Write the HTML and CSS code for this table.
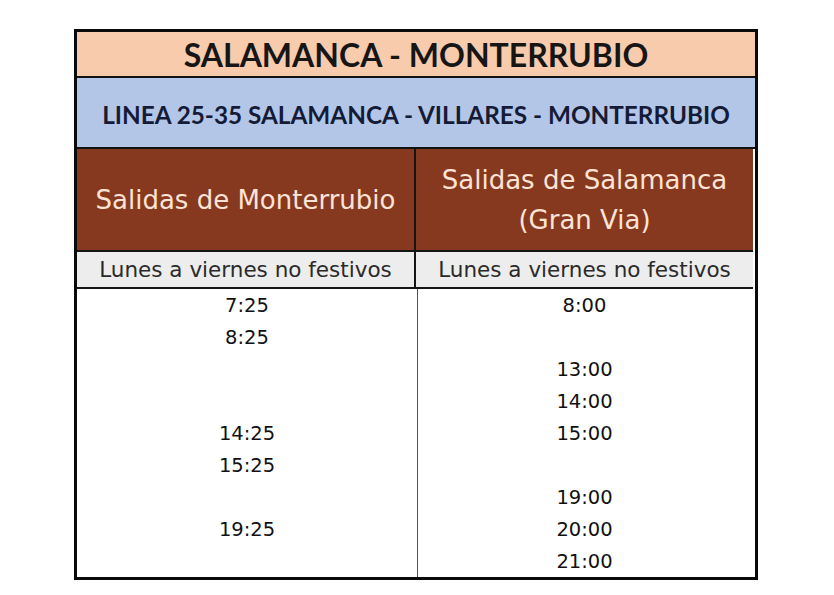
FILE: index.html
```html
<!DOCTYPE html>
<html lang="es">
<head>
<meta charset="utf-8">
<title>Salamanca - Monterrubio</title>
<link rel="stylesheet" href="styles.css">
</head>
<body>
<div class="sheet">
  <div class="title">SALAMANCA - MONTERRUBIO</div>
  <div class="line">LINEA 25-35 SALAMANCA - VILLARES - MONTERRUBIO</div>
  <div class="grid">
    <div class="head left">Salidas de Monterrubio</div>
    <div class="head">Salidas de Salamanca<br>(Gran Via)</div>
    <div class="days left">Lunes a viernes no festivos</div>
    <div class="days">Lunes a viernes no festivos</div>
    <div class="times left">
      <div class="t">7:25</div>
      <div class="t">8:25</div>
      <div class="t"></div>
      <div class="t"></div>
      <div class="t">14:25</div>
      <div class="t">15:25</div>
      <div class="t"></div>
      <div class="t">19:25</div>
      <div class="t"></div>
    </div>
    <div class="times">
      <div class="t">8:00</div>
      <div class="t"></div>
      <div class="t">13:00</div>
      <div class="t">14:00</div>
      <div class="t">15:00</div>
      <div class="t"></div>
      <div class="t">19:00</div>
      <div class="t">20:00</div>
      <div class="t">21:00</div>
    </div>
  </div>
</div>
</body>
</html>
```

FILE: styles.css
```css
html, body {
  margin: 0;
  background: #ffffff;
}
body {
  padding: 29px 0 0 74px;
}
.sheet {
  width: 678px;
  border: 3px solid #0a0a0a;
  background: #ffffff;
}
.title {
  height: 44px;
  border-bottom: 2px solid #111;
  background: #f8cbad;
  display: flex;
  align-items: center;
  justify-content: center;
  font-family: "Lato", "Liberation Sans", sans-serif;
  font-weight: 700;
  font-size: 32px;
  color: #161616;
}
.line {
  height: 69px;
  border-bottom: 2px solid #111;
  background: #b4c6e7;
  display: flex;
  align-items: center;
  justify-content: center;
  padding-top: 3px;
  box-sizing: content-box;
  height: 66px;
  font-family: "Lato", "Liberation Sans", sans-serif;
  font-weight: 700;
  font-size: 24.3px;
  color: #141b36;
}
.grid {
  display: grid;
  grid-template-columns: 339px 337px;
  grid-template-rows: 103px 37px 288px;
}
.left {
  border-right: 2px solid #151515;
}
.head {
  border-bottom: 2px solid #151515;
  background: #86391f;
  display: flex;
  align-items: center;
  justify-content: center;
  text-align: center;
  font-family: "DejaVu Sans", "Liberation Sans", sans-serif;
  font-size: 26px;
  line-height: 40px;
  color: #fbe3d6;
}
.days {
  border-bottom: 2px solid #151515;
  background: #ededed;
  display: flex;
  align-items: center;
  justify-content: center;
  font-family: "DejaVu Sans", "Liberation Sans", sans-serif;
  font-size: 21.5px;
  color: #2a2a2a;
}
.times {
  display: flex;
  flex-direction: column;
}
.times.left {
  border-right: 1px solid #555;
  width: 340px;
}
.t {
  height: 32px;
  display: flex;
  align-items: center;
  justify-content: center;
  font-family: "DejaVu Sans", "Liberation Sans", sans-serif;
  font-size: 19.5px;
  color: #111;
}
```
